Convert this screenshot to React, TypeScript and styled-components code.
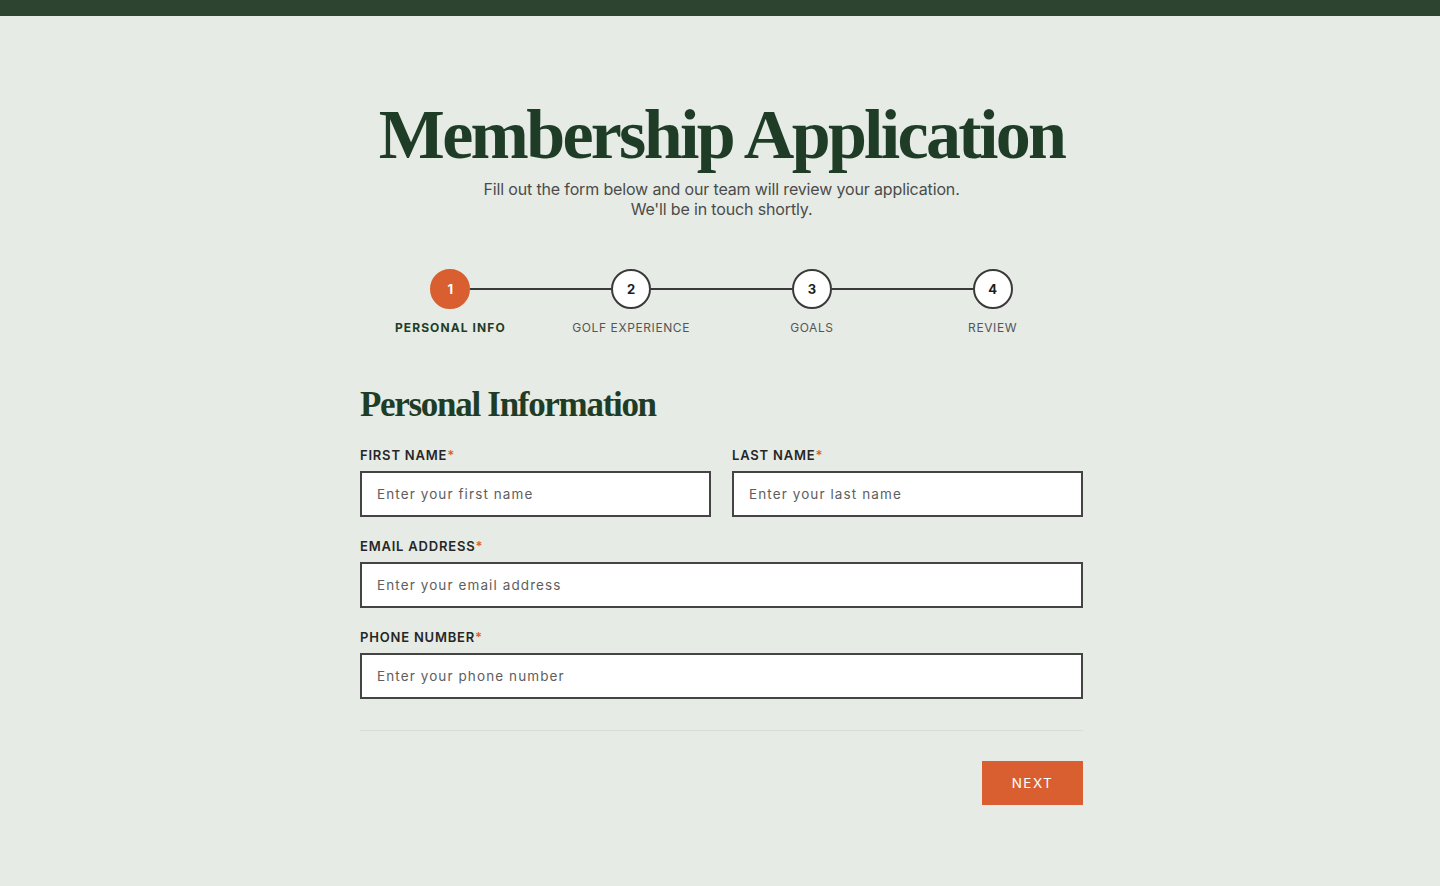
import React from "react";
import styled, { createGlobalStyle } from "styled-components";

const Global = createGlobalStyle`
  html, body { margin: 0; padding: 0; background: #e6ebe5; }
  body { font-family: "Inter", "Liberation Sans", sans-serif; }
  * { box-sizing: border-box; }
`;

const Page = styled.div`
  min-height: 886px;
  background: #e6ebe5;
  border-top: 16px solid #2d4430;
`;

const Main = styled.main`
  width: 723px;
  margin: 0 0 0 calc(50% - 360px);
  padding-top: 84px;
  display: flex;
  flex-direction: column;
`;

const Title = styled.h1`
  margin: 0;
  text-align: center;
  font-family: "Liberation Serif", "DejaVu Serif", serif;
  font-weight: 700;
  font-size: 70px;
  line-height: 70px;
  letter-spacing: -2.7px;
  color: #1f3d26;
`;

const Subtitle = styled.p`
  margin: 9px 0 0;
  text-align: center;
  font-size: 16px;
  line-height: 20px;
  letter-spacing: -0.15px;
  color: #4b4b4b;
`;

const Stepper = styled.ol`
  list-style: none;
  margin: 50px 0 0;
  padding: 0;
  display: grid;
  grid-template-columns: repeat(4, 1fr);
`;

const Step = styled.li<{ $first?: boolean }>`
  position: relative;
  display: flex;
  flex-direction: column;
  align-items: center;
  gap: 11px;
  &::before {
    content: "";
    display: ${(p) => (p.$first ? "none" : "block")};
    position: absolute;
    top: 19px;
    right: calc(50% + 20px);
    width: calc(100% - 40px);
    height: 2px;
    background: #3a3a3a;
  }
`;

const Circle = styled.span<{ $active?: boolean }>`
  width: 40px;
  height: 40px;
  border-radius: 50%;
  display: flex;
  align-items: center;
  justify-content: center;
  font-size: 13px;
  font-weight: 700;
  background: ${(p) => (p.$active ? "#d95f30" : "#ffffff")};
  color: ${(p) => (p.$active ? "#ffffff" : "#1e1e1e")};
  border: 2px solid ${(p) => (p.$active ? "#d95f30" : "#3a3a3a")};
`;

const StepLabel = styled.span<{ $active?: boolean }>`
  font-size: 12px;
  line-height: 16px;
  letter-spacing: ${(p) => (p.$active ? "1.1px" : "0.6px")};
  text-transform: uppercase;
  font-weight: ${(p) => (p.$active ? 700 : 400)};
  color: ${(p) => (p.$active ? "#1f3d26" : "#555")};
`;

const SectionTitle = styled.h2`
  margin: 49px 0 0;
  font-family: "Liberation Serif", "DejaVu Serif", serif;
  font-weight: 700;
  font-size: 35px;
  line-height: 40px;
  letter-spacing: -1.3px;
  color: #1f3d26;
`;

const Form = styled.form`
  margin-top: 22px;
  display: flex;
  flex-direction: column;
  gap: 21px;
`;

const Row = styled.div`
  display: grid;
  grid-template-columns: 1fr 1fr;
  gap: 21px;
`;

const Field = styled.label`
  display: flex;
  flex-direction: column;
  gap: 8px;
`;

const Label = styled.span`
  font-size: 13px;
  line-height: 16px;
  font-weight: 600;
  letter-spacing: 0.8px;
  text-transform: uppercase;
  color: #262626;
`;

const Req = styled.span`
  color: #d95f30;
`;

const Input = styled.input`
  height: 46px;
  width: 100%;
  border: 2px solid #444;
  background: #fff;
  padding: 0 15px;
  font-family: "Inter", "Liberation Sans", sans-serif;
  font-size: 13.5px;
  letter-spacing: 1.1px;
  color: #333;
  outline: none;
  border-radius: 0;
  &::placeholder { color: #5e5e5e; }
`;

const Divider = styled.hr`
  margin: 10px 0 0;
  border: 0;
  border-top: 1px solid #d9dfd8;
`;

const Actions = styled.div`
  display: flex;
  justify-content: flex-end;
  margin-top: 9px;
`;

const NextButton = styled.button`
  width: 101px;
  height: 44px;
  border: 0;
  background: #d95f30;
  color: #fff;
  font-family: "Inter", "Liberation Sans", sans-serif;
  font-size: 13.5px;
  letter-spacing: 1.5px;
  text-transform: uppercase;
  cursor: pointer;
`;

const steps = ["Personal Info", "Golf Experience", "Goals", "Review"];

const LabelText = ({ text }: { text: string }) => (
  <Label>
    {text}
    <Req>*</Req>
  </Label>
);

export default function App() {
  return (
    <Page>
      <Global />
      <Main>
        <Title>Membership Application</Title>
        <Subtitle>
          Fill out the form below and our team will review your application.
          <br />
          We'll be in touch shortly.
        </Subtitle>
        <Stepper>
          {steps.map((s, i) => (
            <Step key={s} $first={i === 0}>
              <Circle $active={i === 0}>{i + 1}</Circle>
              <StepLabel $active={i === 0}>{s}</StepLabel>
            </Step>
          ))}
        </Stepper>
        <SectionTitle>Personal Information</SectionTitle>
        <Form onSubmit={(e) => e.preventDefault()}>
          <Row>
            <Field>
              <LabelText text="First Name" />
              <Input placeholder="Enter your first name" />
            </Field>
            <Field>
              <LabelText text="Last Name" />
              <Input placeholder="Enter your last name" />
            </Field>
          </Row>
          <Field>
            <LabelText text="Email Address" />
            <Input placeholder="Enter your email address" />
          </Field>
          <Field>
            <LabelText text="Phone Number" />
            <Input placeholder="Enter your phone number" />
          </Field>
          <Divider />
          <Actions>
            <NextButton type="submit">Next</NextButton>
          </Actions>
        </Form>
      </Main>
    </Page>
  );
}
